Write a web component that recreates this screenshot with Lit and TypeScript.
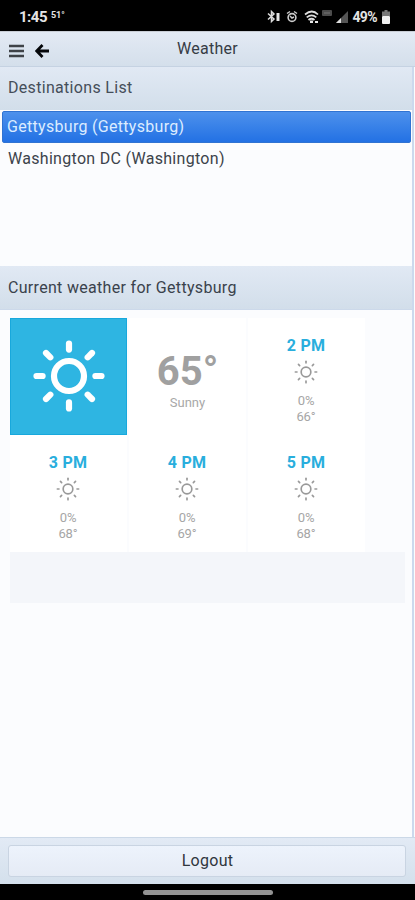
import { LitElement, html, svg, css } from "lit";
import { customElement, property } from "lit/decorators.js";

@customElement("sun-icon")
class SunIcon extends LitElement {
  @property({ type: Number }) size = 24;
  @property({ type: Boolean }) bold = false;

  static styles = css`
    :host { display: block; line-height: 0; }
    svg { display: block; }
  `;

  render() {
    const r = this.bold ? 15 : 14.5;
    const w = this.bold ? 6.2 : 5;
    const inner = this.bold ? 26.4 : 27;
    const outer = this.bold ? 32.5 : 32;
    return html`<svg width=${this.size} height=${this.size} viewBox="-36 -36 72 72" fill="none"
      stroke="currentColor" stroke-width=${w} stroke-linecap="round">
      <circle r=${r}></circle>
      ${[0, 45, 90, 135, 180, 225, 270, 315].map((a) =>
        svg`<path d="M0 ${-inner}V${-outer}" transform="rotate(${a})"></path>`)}
    </svg>`;
  }
}

@customElement("hour-card")
class HourCard extends LitElement {
  @property() hour = "";
  @property() rain = "";
  @property() temp = "";

  static styles = css`
    :host {
      display: flex; flex-direction: column; align-items: center;
      box-sizing: border-box; background: #fff; padding: 18px 1px 0 0; color: #a6a6a6;
    }
    .hour { font-size: 16px; line-height: 20px; font-weight: 700; color: #29aedd; letter-spacing: 0.2px; }
    .icon { margin: 4px 0 9px; color: #999; }
    .value { font-size: 13px; line-height: 15.5px; letter-spacing: -0.1px; }
  `;

  render() {
    return html`
      <div class="hour">${this.hour}</div>
      <sun-icon class="icon" .size=${24}></sun-icon>
      <div class="value">${this.rain}</div>
      <div class="value">${this.temp}</div>
    `;
  }
}

@customElement("app-root")
class AppRoot extends LitElement {
  static styles = css`
    :host {
      display: flex; flex-direction: column; width: 415px; height: 900px; overflow: hidden;
      font-family: Roboto, "Liberation Sans", sans-serif; font-size: 16px; color: #3c434b;
      background: #fbfcfe;
    }
    .status {
      flex: none; height: 31px; background: #000; color: #e4e4e4; display: flex; align-items: center;
      padding: 2px 25px 0 19px; box-sizing: border-box; font-weight: 700;
    }
    .clock { font-size: 15px; letter-spacing: -0.5px; line-height: 20px; }
    .outside { font-size: 9px; margin: -3px 0 0 4px; line-height: 12px; letter-spacing: -0.1px; }
    .indicators { margin-left: auto; display: flex; align-items: center; }
    .indicators svg { display: block; }
    .charge { font-size: 14px; letter-spacing: -0.6px; line-height: 20px; margin: 0 5px 0 3px; }
    .header {
      flex: none; height: 36px; box-sizing: border-box; display: grid;
      grid-template-columns: 60px 1fr 60px; background: linear-gradient(#e3eaf4, #d4dfeb);
      border-bottom: 1px solid #c5d2e2; border-top: 1px solid #c8cdd5;
    }
    .tools { display: flex; gap: 11px; padding: 12px 0 0 9px; }
    .heading { text-align: center; line-height: 33px; letter-spacing: 0.3px; color: #363c45; }
    .content { flex: 1; display: flex; flex-direction: column; border-right: 2px solid #cbd9ed; min-height: 0; margin-right: 1px; }
    .title {
      flex: none; box-sizing: border-box; padding-left: 8px; line-height: 42px; letter-spacing: 0.31px;
      background: linear-gradient(#e1e9f4, #d2deea); color: #454e59;
    }
    .first { height: 43px; }
    .second { height: 44px; line-height: 43px; border-bottom: 1px solid #ccd9ea; color: #3a424c; }
    .list { flex: none; height: 156px; box-sizing: border-box; padding: 1px 1px 0 2px; }
    .item { height: 32px; line-height: 32px; box-sizing: border-box; padding-left: 6px; letter-spacing: 0.3px; }
    .selected {
      color: #dcecff; background: linear-gradient(#4d91ec, #2371e4); border: 1px solid #3073d2;
      border-radius: 2px; line-height: 30px; padding-left: 4px;
    }
    .weather { flex: 1; padding: 8px 7px 0 10px; }
    .grid { display: grid; grid-template-columns: repeat(3, 117px); column-gap: 2px; grid-template-rows: 117px 117px; }
    .now {
      background: #2eb5e2; box-sizing: border-box; border: 1px solid #18a8dc; color: #fff;
      display: flex; align-items: center; justify-content: center; padding-bottom: 2px;
    }
    .reading { background: #fff; display: flex; flex-direction: column; align-items: center; padding-top: 31px; }
    .temp { font-size: 40px; line-height: 46px; font-weight: 700; color: #a0a0a0; }
    .sky { font-size: 13px; line-height: 16px; color: #a8a8a8; }
    .strip { height: 51px; background: #f4f6fa; }
    .footer {
      flex: none; height: 47px; box-sizing: border-box; padding: 7px 9px 7px 8px;
      border-top: 1px solid #cbd8e7; background: linear-gradient(#e2eaf5, #d4e0ec);
    }
    .logout {
      display: block; width: 100%; height: 32px; box-sizing: border-box; border: 1px solid #c9d4e2;
      border-radius: 3px; background: linear-gradient(#edf3fc, #e5ebf5); padding: 0 0 1px 1px; margin: 0;
      font: inherit; letter-spacing: 0.3px; color: #30363d; text-align: center;
    }
    .gesture { flex: none; height: 16px; background: #000; display: flex; justify-content: center; padding-top: 6px; box-sizing: border-box; }
    .pill { width: 130px; height: 5px; border-radius: 3px; background: #929292; }
  `;

  render() {
    return html`
      <div class="status">
        <span class="clock">1:45</span><span class="outside">51°</span>
        <div class="indicators">
          <svg width="82" height="16" viewBox="0 0 82 16" fill="none">
            <path d="M1 4.500l6 5.500-2.500 2.500V2.500L7 5 1 10.500" stroke="#ddd" stroke-width="1.500"></path>
            <rect x="9.500" y="4" width="3" height="8" fill="#e6e6e6"></rect>
            <circle cx="25" cy="8.500" r="3.900" stroke="#ccc" stroke-width="1.600"></circle>
            <path d="M20 4.500l3-2M30 4.500l-3-2M23 7l2 2 2-1" stroke="#ccc" stroke-width="1.500"></path>
            <path d="M38 5.500q7-6 13 0M39.700 8.300q5-4 9.600 0M41.500 11q3-2.500 6 0" stroke="#ddd" stroke-width="1.700"></path>
            <path d="M43 11.500h3V14h-3zM48 12h3v2h-3z" fill="#e8e8e8"></path>
            <rect x="55" y="1" width="10" height="6" rx="1" fill="#4c4c4c"></rect>
            <path d="M57 4h6" stroke="#777"></path>
            <path d="M69 14L81 2v12z" fill="#555"></path>
            <path d="M69 14l5-5v5z" fill="#ddd"></path>
          </svg>
          <span class="charge">49%</span>
          <svg width="8" height="14" viewBox="0 0 8 14">
            <path d="M2.500 0h3v1.500H8V6H0V1.500h2.500z" fill="#777"></path>
            <rect y="6" width="8" height="8" rx="1" fill="#f0f0f0"></rect>
          </svg>
        </div>
      </div>
      <div class="header">
        <div class="tools">
          <svg width="15" height="14" viewBox="0 0 15 14"><path d="M0 2h15M0 7h15M0 12h15" stroke="#3f4348" stroke-width="2.400"></path></svg>
          <svg width="14" height="14" viewBox="0 0 14 14" fill="none"><path d="M7.500 1L1.700 7l5.800 6M2 7h12" stroke="#05070a" stroke-width="2.800"></path></svg>
        </div>
        <div class="heading">Weather</div>
      </div>
      <div class="content">
        <div class="title first">Destinations List</div>
        <div class="list">
          <div class="item selected">Gettysburg (Gettysburg)</div>
          <div class="item">Washington DC (Washington)</div>
        </div>
        <div class="title second">Current weather for Gettysburg</div>
        <div class="weather">
          <div class="grid">
            <div class="now"><sun-icon .size=${72} bold></sun-icon></div>
            <div class="reading"><div class="temp">65°</div><div class="sky">Sunny</div></div>
            <hour-card hour="2 PM" rain="0%" temp="66°"></hour-card>
            <hour-card hour="3 PM" rain="0%" temp="68°"></hour-card>
            <hour-card hour="4 PM" rain="0%" temp="69°"></hour-card>
            <hour-card hour="5 PM" rain="0%" temp="68°"></hour-card>
          </div>
          <div class="strip"></div>
        </div>
      </div>
      <div class="footer"><button class="logout">Logout</button></div>
      <div class="gesture"><div class="pill"></div></div>
    `;
  }
}
